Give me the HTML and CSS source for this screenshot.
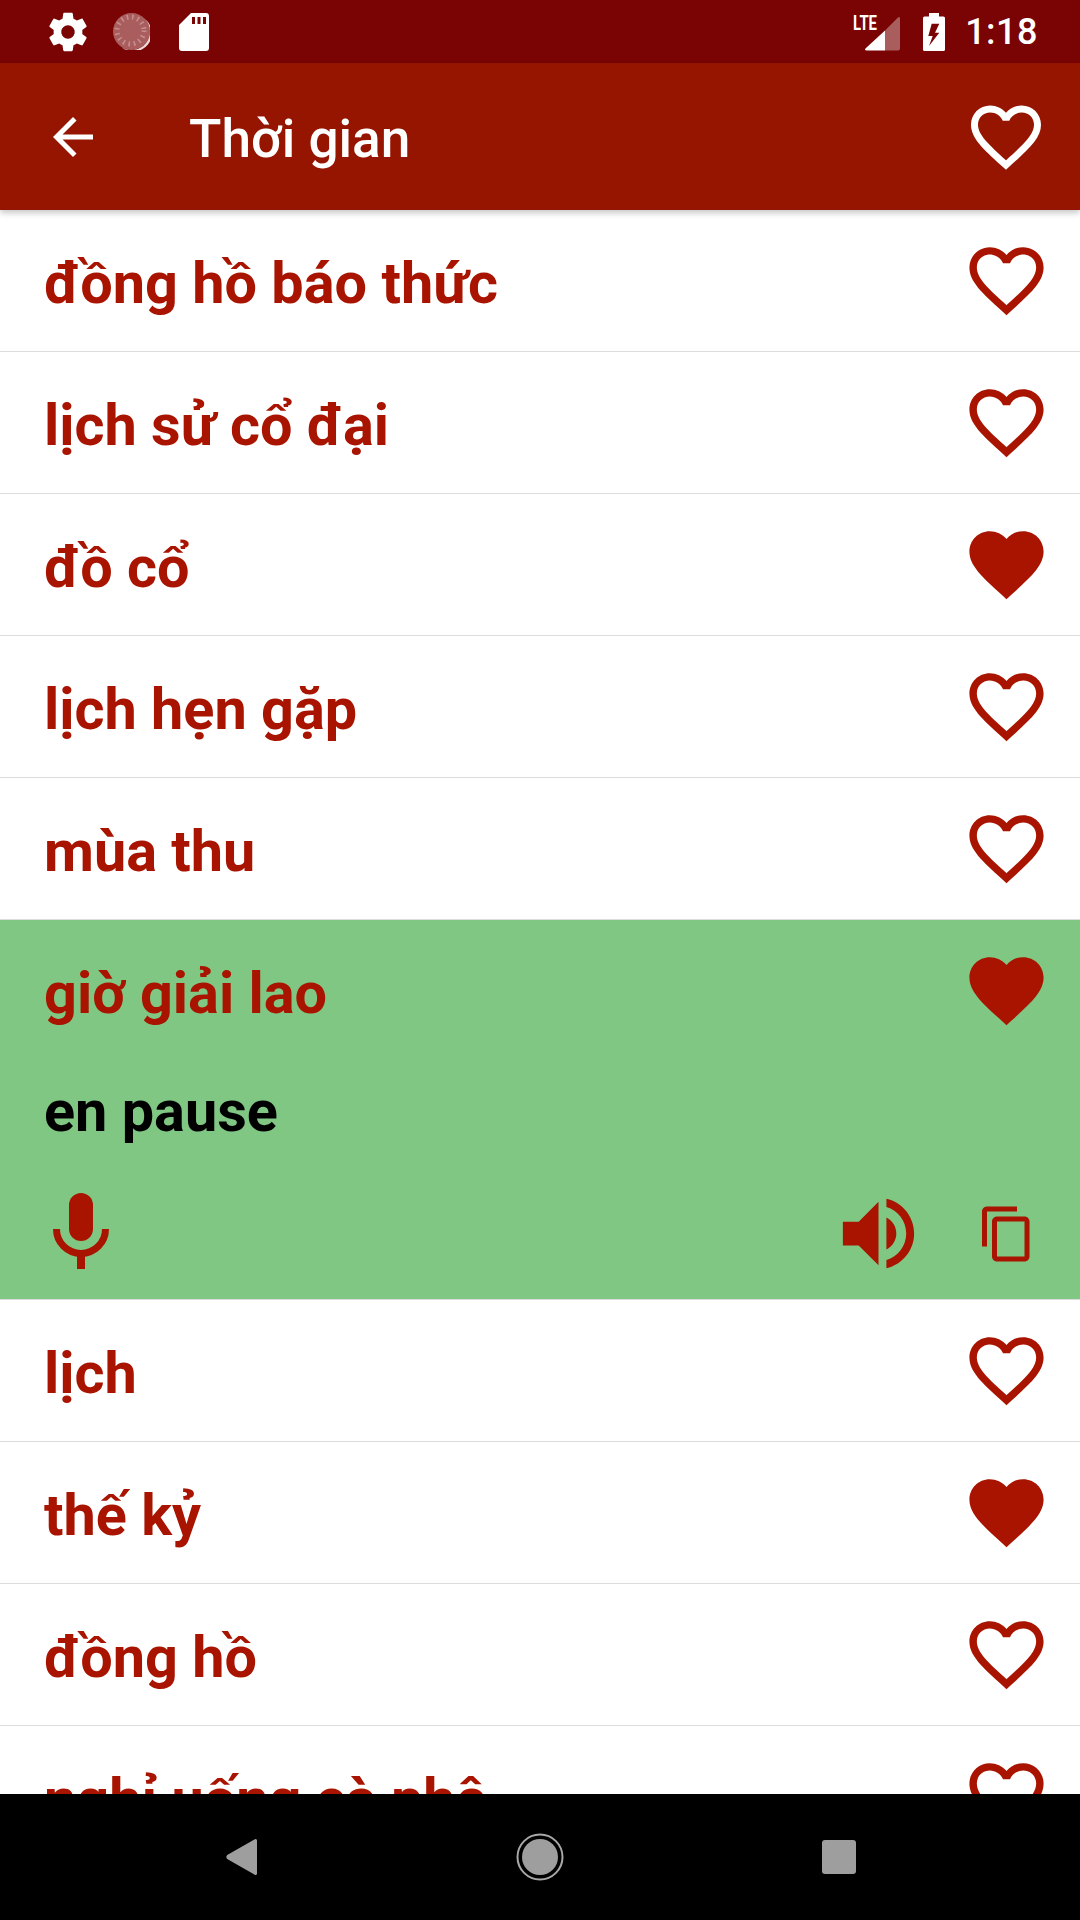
FILE: index.html
```html
<!DOCTYPE html>
<html lang="vi">
<head>
<meta charset="utf-8">
<title>Thời gian</title>
<link rel="stylesheet" href="styles.css">
</head>
<body>
<svg class="defs" width="0" height="0" aria-hidden="true">
  <defs>
    <symbol id="heart-o" viewBox="0 0 24 24"><path d="M16.5 3c-1.74 0-3.41.81-4.5 2.09C10.91 3.81 9.24 3 7.5 3 4.42 3 2 5.42 2 8.5c0 3.78 3.4 6.86 8.55 11.54L12 21.35l1.45-1.32C18.6 15.36 22 12.28 22 8.5 22 5.42 19.58 3 16.5 3zm-4.4 15.55l-.1.1-.1-.1C7.14 14.24 4 11.39 4 8.5 4 6.5 5.5 5 7.5 5c1.54 0 3.04.99 3.57 2.36h1.87C13.46 5.99 14.96 5 16.5 5c2 0 3.5 1.5 3.5 3.5 0 2.89-3.14 5.74-7.9 10.05z"/></symbol>
    <symbol id="heart" viewBox="0 0 24 24"><path d="M12 21.35l-1.45-1.32C5.4 15.36 2 12.28 2 8.5 2 5.42 4.42 3 7.5 3c1.74 0 3.41.81 4.5 2.09C13.09 3.81 14.76 3 16.5 3 19.58 3 22 5.42 22 8.5c0 3.78-3.4 6.86-8.55 11.54L12 21.35z"/></symbol>
  </defs>
</svg>
<div class="screen">
  <div class="status">
    <div class="status-left">
      <svg class="st-gear" viewBox="0 0 24 24"><path d="M19.43 12.98c.04-.32.07-.64.07-.98s-.03-.66-.07-.98l2.11-1.65c.19-.15.24-.42.12-.64l-2-3.46c-.12-.22-.39-.3-.61-.22l-2.49 1c-.52-.4-1.08-.73-1.69-.98l-.38-2.65C14.46 2.18 14.25 2 14 2h-4c-.25 0-.46.18-.49.42l-.38 2.65c-.61.25-1.17.59-1.69.98l-2.49-1c-.23-.09-.49 0-.61.22l-2 3.46c-.13.22-.07.49.12.64l2.11 1.65c-.04.32-.07.65-.07.98s.03.66.07.98l-2.11 1.65c-.19.15-.24.42-.12.64l2 3.46c.12.22.39.3.61.22l2.49-1c.52.4 1.08.73 1.69.98l.38 2.65c.03.24.24.42.49.42h4c.25 0 .46-.18.49-.42l.38-2.65c.61-.25 1.17-.59 1.69-.98l2.49 1c.23.09.49 0 .61-.22l2-3.46c.12-.22.07-.49-.12-.64l-2.11-1.65zM12 15.5c-1.93 0-3.5-1.57-3.5-3.5s1.57-3.5 3.5-3.5 3.5 1.57 3.5 3.5-1.57 3.5-3.5 3.5z"/></svg>
      <svg class="st-moon" viewBox="0 0 37 37">
        <circle class="moon-disc" cx="18.5" cy="18.5" r="18.5"/>
        <circle class="moon-ticks" cx="17.500" cy="17.500" r="13.500"/>
        <path class="moon-edge" d="M32 6A18.500 18.500 0 0 1 9 34.500 17 17 0 0 0 32 6z"/>
      </svg>
      <svg class="st-sd" viewBox="0 0 30 38"><path fill-rule="evenodd" d="M12 0h15a3 3 0 0 1 3 3v32a3 3 0 0 1-3 3H3a3 3 0 0 1-3-3V12zM13 4v7h3V4zM18.500 4v7h3V4zM24 4v7h3V4z"/></svg>
    </div>
    <div class="status-right">
      <svg class="st-signal" viewBox="0 0 48 46">
        <path class="sig-dim" d="M33 21.500L45 9.500Q48 6.500 48 10V39.500a2 2 0 0 1-2 2H33z"/>
        <path d="M33 21.500V41.500H15Q11.500 41.500 14 39z"/>
        <text class="sig-lte" x="1" y="20.500" textLength="24" lengthAdjust="spacingAndGlyphs">LTE</text>
      </svg>
      <svg class="st-batt" viewBox="0 0 22 38"><path fill-rule="evenodd" d="M6 0h10v3.500h4.500a1.500 1.500 0 0 1 1.500 1.500v31.500a1.500 1.500 0 0 1-1.500 1.500h-19A1.500 1.500 0 0 1 0 36.500V5a1.500 1.500 0 0 1 1.500-1.500H6zM8.700 10.700L5.300 23H9.700L6 33 16.300 19.700H12L16.300 10.700z"/></svg>
      <span class="clock">1:18</span>
    </div>
  </div>

  <header class="appbar">
    <svg class="back" viewBox="0 0 24 24"><path d="M20 11H7.830l5.590-5.590L12 4l-8 8 8 8 1.410-1.410L7.830 13H20v-2z"/></svg>
    <h1 class="title">Thời gian</h1>
    <svg class="bar-heart"><use href="#heart-o"/></svg>
  </header>

  <main class="list">
    <div class="row"><span class="word">đồng hồ báo thức</span><svg class="heart"><use href="#heart-o"/></svg></div>
    <div class="row"><span class="word">lịch sử cổ đại</span><svg class="heart"><use href="#heart-o"/></svg></div>
    <div class="row"><span class="word">đồ cổ</span><svg class="heart"><use href="#heart"/></svg></div>
    <div class="row"><span class="word">lịch hẹn gặp</span><svg class="heart"><use href="#heart-o"/></svg></div>
    <div class="row"><span class="word">mùa thu</span><svg class="heart"><use href="#heart-o"/></svg></div>
    <section class="open">
      <div class="open-head"><span class="word">giờ giải lao</span><svg class="heart"><use href="#heart"/></svg></div>
      <div class="translation">en pause</div>
      <div class="actions">
        <svg class="mic" viewBox="0 0 56 76">
          <rect x="16" y="0" width="24" height="48" rx="12"/>
          <path class="mic-arc" d="M3.500 36a24.500 24.500 0 0 0 49 0"/>
          <rect x="24" y="60" width="8" height="16"/>
        </svg>
        <svg class="speaker" viewBox="0 0 24 24"><path d="M3 9v6h4l5 5V4L7 9H3zm13.500 3c0-1.770-1.020-3.290-2.500-4.030v8.050c1.480-.73 2.500-2.250 2.500-4.020zM14 3.230v2.060c2.890.86 5 3.540 5 6.710s-2.110 5.850-5 6.710v2.060c4.010-.91 7-4.490 7-8.770s-2.990-7.860-7-8.770z"/></svg>
        <svg class="copy" viewBox="0 0 24 24"><path d="M16 1H4c-1.100 0-2 .9-2 2v14h2V3h12V1zm3 4H8c-1.100 0-2 .9-2 2v14c0 1.100.9 2 2 2h11c1.100 0 2-.9 2-2V7c0-1.100-.9-2-2-2zm0 16H8V7h11v14z"/></svg>
      </div>
    </section>
    <div class="row"><span class="word">lịch</span><svg class="heart"><use href="#heart-o"/></svg></div>
    <div class="row"><span class="word">thế kỷ</span><svg class="heart"><use href="#heart"/></svg></div>
    <div class="row"><span class="word">đồng hồ</span><svg class="heart"><use href="#heart-o"/></svg></div>
    <div class="row"><span class="word">nghỉ uống cà phê</span><svg class="heart"><use href="#heart-o"/></svg></div>
  </main>

  <nav class="navbar">
    <svg class="nav-icon" viewBox="0 0 60 60"><path d="M46 13.500v33c0 1.500-1.600 2-2.600 1L16.200 32a3 3 0 0 1 0-4L43.400 12.500c1-1 2.600-.5 2.600 1z"/></svg>
    <svg class="nav-icon" viewBox="0 0 60 60"><circle class="nav-ring" cx="30" cy="30" r="22.500"/><circle cx="30" cy="30" r="18"/></svg>
    <svg class="nav-icon" viewBox="0 0 60 60"><rect x="13" y="13" width="34" height="34" rx="3"/></svg>
  </nav>
</div>
</body>
</html>
```

FILE: styles.css
```css
* { box-sizing: border-box; }
html, body { margin: 0; padding: 0; }
body { font-family: Roboto, "Noto Sans", sans-serif; background: #fff; }
.defs { display: block; height: 0; }

.screen {
  width: 1080px;
  height: 1920px;
  display: flex;
  flex-direction: column;
  overflow: hidden;
}

/* status bar */
.status {
  flex: 0 0 63px;
  background: #790403;
  color: #fff;
  display: flex;
  align-items: center;
  justify-content: space-between;
  padding: 0 42px 0 45px;
}
.status svg { fill: #fff; display: block; }
.status-left { display: flex; align-items: center; }
.status-right { display: flex; align-items: center; }
.st-gear { width: 46px; height: 46px; margin-right: 22px; }
.st-moon { width: 37px; height: 37px; margin-right: 29px; }
.st-sd { width: 30px; height: 38px; }
.moon-disc { fill: rgba(255, 255, 255, .36); }
.moon-ticks { fill: none; stroke: rgba(255, 255, 255, .3); stroke-width: 5; stroke-dasharray: 1.600 3.800; }
.moon-edge { fill: rgba(255, 255, 255, .85); }
.st-signal { width: 48px; height: 46px; margin-right: 23px; }
.sig-dim { fill: rgba(255, 255, 255, .36); }
.sig-lte { font-family: Roboto, sans-serif; font-weight: 700; font-size: 20px; fill: #fff; }
.st-batt { width: 22px; height: 38px; margin-right: 20px; }
.clock { font-size: 36px; font-weight: 500; line-height: 40px; letter-spacing: .5px; }

/* app bar */
.appbar {
  flex: 0 0 147px;
  background: #951500;
  display: flex;
  align-items: center;
  padding: 0 32px 0 43px;
  position: relative;
  z-index: 2;
  box-shadow: 0 3px 6px rgba(0, 0, 0, .22);
}
.back { width: 60px; height: 60px; fill: #fff; flex: none; }
.title {
  margin: 0 0 0 86px;
  padding-top: 5px;
  color: #fff;
  font-size: 53.2px;
  font-weight: 500;
  flex: 1;
}
.bar-heart { width: 84px; height: 84px; fill: #fff; flex: none; }

/* list */
.list { flex: 1; min-height: 0; overflow: hidden; }
.row {
  height: 142px;
  display: flex;
  align-items: center;
  justify-content: space-between;
  padding: 0 29px 0 44px;
  border-bottom: 1px solid #dcdcdc;
}
.word {
  color: #a81400;
  font-size: 57.6px;
  font-weight: 700;
  line-height: 1.2;
  padding-top: 6px;
  white-space: nowrap;
}
.heart { width: 89px; height: 89px; fill: #a81400; flex: none; }

/* opened row */
.open {
  height: 380px;
  background: #81c784;
  border-bottom: 1px solid #dcdcdc;
}
.open-head {
  height: 141px;
  display: flex;
  align-items: center;
  justify-content: space-between;
  padding: 0 29px 0 44px;
}
.translation {
  height: 84px;
  color: #000;
  font-size: 57.6px;
  font-weight: 700;
  line-height: 64px;
  padding: 19px 44px 0;
}
.actions {
  display: flex;
  align-items: flex-start;
  padding: 41px 43px 0 53px;
}
.actions svg { fill: #a81400; flex: none; display: block; }
.mic { width: 56px; height: 76px; margin: 7px auto 0 0; }
.mic-arc { fill: none !important; stroke: #a81400; stroke-width: 7; }
.speaker { width: 95px; height: 95px; margin-right: 51px; }
.copy { width: 60px; height: 60px; margin-top: 18px; }

/* navigation bar */
.navbar {
  flex: 0 0 126px;
  background: #000;
  display: flex;
  align-items: center;
  justify-content: center;
  gap: 239px;
  position: relative;
  z-index: 2;
}
.nav-icon { width: 60px; height: 60px; fill: #9e9e9e; }
.nav-ring { fill: none; stroke: #a8a8a8; stroke-width: 2; }
```
